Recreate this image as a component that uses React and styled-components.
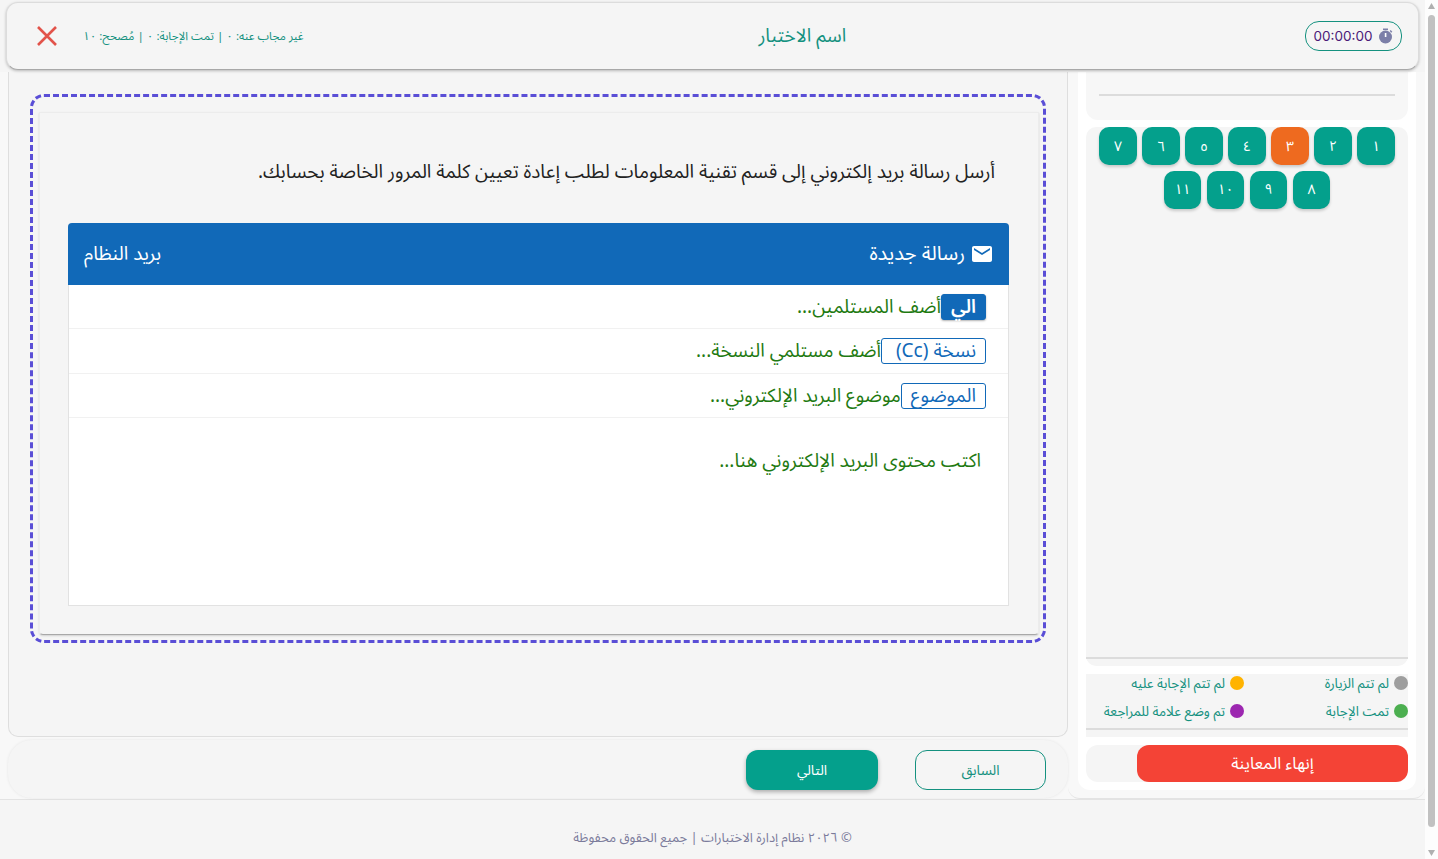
import React from "react";
import styled, { createGlobalStyle } from "styled-components";

const Global = createGlobalStyle`
  html, body { margin: 0; padding: 0; height: 100%; overflow: hidden; background: #f5f5f5; }
  body { font-family: "Noto Sans Arabic", "DejaVu Sans", sans-serif; }
  * { box-sizing: border-box; }
`;

const Frame = styled.div`
  display: flex;
  height: 100vh;
  overflow: hidden;
`;
const ScrollRail = styled.div`
  width: 13px;
  flex: none;
  padding: 3px 3px;
  display: flex;
  flex-direction: column;
  align-items: center;
  background: #fdfdfd;
`;
const ScrollThumb = styled.div`
  width: 7px;
  height: 812px;
  margin: 6px 0 23px;
  flex: none;
  border-radius: 4px;
  background: #c1c1c1;
`;
const Page = styled.div`
  direction: rtl;
  flex: 1;
  min-width: 0;
  padding-top: 2px;
  background: #f5f5f5;
`;
const Header = styled.header`
  height: 68px;
  margin: 0 6px;
  padding: 0 16px 0 30px;
  display: flex;
  align-items: center;
  justify-content: space-between;
  background: #f5f5f5;
  border: 1px solid #dcdcdc;
  border-bottom-color: #a8a8a8;
  border-radius: 12px;
  box-shadow: 0 1px 3px rgba(0,0,0,.25);
  position: relative;
  z-index: 2;
`;
const Timer = styled.div`
  width: 97px;
  height: 30px;
  border: 1px solid #14917f;
  border-radius: 14px;
  display: flex;
  align-items: center;
  justify-content: center;
  gap: 6px;
  font: 13.5px Inter, "Liberation Sans", sans-serif;
  color: #4a1a78;
`;
const Title = styled.h1`
  margin: 0 4px 0 0;
  font-size: 19px;
  font-weight: 400;
  color: #14917f;
`;
const HeaderEnd = styled.div`
  display: flex;
  align-items: center;
  gap: 26px;
`;
const Stats = styled.span`
  font-size: 11.6px;
  color: #14917f;
`;
const Body = styled.div`
  display: flex;
  height: 727px;
  margin-top: 2px;
  background: #f8f8f8;
`;
const Side = styled.aside`
  width: 357px;
  flex: none;
  padding: 0 9px 8px 10px;
  border-radius: 0 0 12px 12px;
  border-bottom: 1px solid #e3e3e3;
`;
const SideCard = styled.div`
  height: 100%;
  padding: 0 8px 8px;
  background: #fff;
  border-radius: 0 0 12px 12px;
  display: flex;
  flex-direction: column;
`;
const TopPanel = styled.div`
  height: 48px;
  padding: 22px 13px 0;
  background: #f7f7f7;
  border-radius: 0 0 12px 12px;
`;
const Rule = styled.div`
  height: 2px;
  flex: none;
  background: #dcdcdc;
`;
const NumPanel = styled.div`
  flex: 1;
  margin-top: 7px;
  padding-bottom: 7px;
  background: #f5f5f5;
  border-radius: 10px;
  display: flex;
  flex-direction: column;
`;
const NumGrid = styled.div`
  flex: 1;
  padding: 0 13px;
  display: flex;
  flex-wrap: wrap;
  justify-content: center;
  align-content: flex-start;
  gap: 5.5px 5.5px;
`;
const Num = styled.button`
  width: 37.5px;
  height: 38px;
  padding: 0;
  border: 0;
  border-radius: 10px;
  background: ${p => (p.$current ? "#ee6a1f" : "#04a08c")};
  box-shadow: 0 2px 3px rgba(0,0,0,.18);
  color: #fff;
  font: inherit;
  font-size: 14px;
`;
const Legend = styled.div`
  margin-top: 8px;
  height: 63px;
  background: #f5f5f5;
  display: flex;
  flex-direction: column;
`;
const LegendGrid = styled.div`
  height: 46px;
  margin-bottom: 8px;
  display: grid;
  grid-template-columns: 164px 1fr;
  grid-auto-rows: 18px;
  row-gap: 10px;
`;
const LegendItem = styled.div`
  display: flex;
  align-items: center;
  gap: 5px;
  font-size: 13.5px;
  color: #14917f;
  white-space: nowrap;
`;
const Dot = styled.span`
  width: 14px;
  height: 14px;
  flex: none;
  border-radius: 50%;
  background: ${p => p.$c};
`;
const FinishPanel = styled.div`
  margin-top: 8px;
  height: 37px;
  background: #f5f5f5;
  border-radius: 12px;
`;
const Finish = styled.button`
  width: 271px;
  height: 37px;
  display: block;
  border: 0;
  border-radius: 12px;
  background: #f44336;
  color: #fff;
  font: inherit;
  font-size: 16.5px;
`;
const MainCol = styled.div`
  flex: 1;
  min-width: 0;
  padding: 0 0 0 8px;
  display: flex;
  flex-direction: column;
`;
const MainPanel = styled.main`
  height: 665px;
  padding: 22px 21px 0;
  border: 1px solid #dedede;
  border-top: 0;
  border-radius: 0 0 10px 10px;
  background: #f5f5f5;
`;
const Dashed = styled.section`
  height: 549px;
  padding: 15px 4px 5px 6px;
  border: 3px dashed #5a4ed6;
  border-radius: 14px;
`;
const QCard = styled.div`
  height: 100%;
  padding: 45px 29px 0 28px;
  border: 1px solid #ececec;
  border-bottom-color: #a8a8a8;
  border-radius: 0 0 4px 4px;
  box-shadow: 0 1px 2px rgba(0,0,0,.15);
`;
const Question = styled.p`
  margin: 0 0 37px;
  padding-right: 14px;
  height: 28px;
  line-height: 28px;
  font-size: 19px;
  color: #222;
  white-space: nowrap;
`;
const Mailbox = styled.div`
  height: 383px;
  background: #fff;
  border: 1px solid #e2e2e2;
  border-top: 0;
  border-radius: 4px 4px 0 0;
`;
const MailHead = styled.div`
  height: 62px;
  margin: 0 -1px;
  padding: 0 15px 0 16px;
  display: flex;
  align-items: center;
  justify-content: space-between;
  background: #1169b8;
  border-radius: 4px 4px 0 0;
  color: #fff;
  font-size: 19px;
`;
const MailTitle = styled.div`
  display: flex;
  align-items: center;
  gap: 5px;
  font-size: 20px;
`;
const Row = styled.div`
  height: ${p => p.$h || 44}px;
  padding: 0 22px;
  display: flex;
  align-items: center;
  border-bottom: 1px solid #f1f1f1;
  font-size: 19px;
  color: #1f7a12;
`;
const Tag = styled.span`
  height: 26px;
  min-width: ${p => p.$w || 0}px;
  padding: 0 9px;
  border: 1px solid #1169b8;
  border-radius: 3px;
  display: flex;
  align-items: center;
  font-size: 19px;
  font-weight: ${p => (p.$solid ? 600 : 400)};
  color: ${p => (p.$solid ? "#fff" : "#1169b8")};
  background: ${p => (p.$solid ? "#1169b8" : "transparent")};
  box-shadow: ${p => (p.$solid ? "0 1px 2px rgba(0,0,0,.3)" : "none")};
`;
const BodyText = styled.div`
  padding: 23px 27px 0 0;
  font-size: 19px;
  color: #1f7a12;
`;
const NavBar = styled.div`
  height: 58px;
  margin-top: 3px;
  padding: 10px 22px 0 0;
  display: flex;
  gap: 37px;
  background: #f5f5f5;
  border-radius: 24px;
  box-shadow: 0 0 3px rgba(0,0,0,.08);
`;
const NavBtn = styled.button`
  width: ${p => (p.$primary ? 132 : 131)}px;
  height: 40px;
  border-radius: 12px;
  border: ${p => (p.$primary ? "0" : "1px solid #14917f")};
  background: ${p => (p.$primary ? "#04a08c" : "transparent")};
  color: ${p => (p.$primary ? "#fff" : "#14917f")};
  box-shadow: ${p => (p.$primary ? "0 2px 4px rgba(0,0,0,.3)" : "none")};
  font: inherit;
  font-size: 14px;
`;
const Footer = styled.footer`
  height: 82px;
  padding-top: 24px;
  border-top: 1px solid #e3e3e3;
  text-align: center;
  font-size: 13px;
  color: #7b7b9b;
`;

const Stopwatch = () => (
  <svg width="15" height="16" viewBox="0 0 15 16" aria-hidden="true">
    <rect x="5" y="0.5" width="5" height="1.6" fill="#7c7fa8" />
    <circle cx="7.5" cy="9" r="6.5" fill="#7c7fa8" />
    <rect x="6.8" y="5" width="1.6" height="4" fill="#fff" />
    <path d="M12.2 2.6l1.6 1.6" stroke="#7c7fa8" strokeWidth="1.4" />
  </svg>
);
const Close = () => (
  <svg width="20" height="20" viewBox="0 0 20 20" aria-hidden="true">
    <path d="M1 1l18 18M19 1L1 19" stroke="#e2534a" strokeWidth="2.6" />
  </svg>
);
const Envelope = () => (
  <svg width="24" height="24" viewBox="0 0 24 24" fill="#fff" aria-hidden="true">
    <path d="M20 4H4c-1.1 0-2 .9-2 2v12c0 1.1.9 2 2 2h16c1.1 0 2-.9 2-2V6c0-1.1-.9-2-2-2zm0 4l-8 5-8-5V6l8 5 8-5v2z" />
  </svg>
);
const Arrow = ({ down }) => (
  <svg width="7" height="6" viewBox="0 0 7 6" aria-hidden="true">
    <path d={down ? "M0 0h7L3.5 6z" : "M3.5 0L7 6H0z"} fill="#b0b0b0" />
  </svg>
);

const nums = ["١", "٢", "٣", "٤", "٥", "٦", "٧", "٨", "٩", "١٠", "١١"];

export default function App() {
  return (
    <Frame>
      <Global />
      <Page>
        <Header>
          <Timer>
            <Stopwatch />
            <span>00:00:00</span>
          </Timer>
          <Title>اسم الاختبار</Title>
          <HeaderEnd>
            <Stats>غير مجاب عنه: ٠ | تمت الإجابة: ٠ | مُصحح: ١٠</Stats>
            <Close />
          </HeaderEnd>
        </Header>
        <Body>
          <Side>
            <SideCard>
              <TopPanel><Rule /></TopPanel>
              <NumPanel>
                <NumGrid>
                  {nums.map((n, i) => <Num key={n} $current={i === 2}>{n}</Num>)}
                </NumGrid>
                <Rule />
              </NumPanel>
              <Legend>
                <LegendGrid>
                  <LegendItem><Dot $c="#9e9e9e" />لم تتم الزيارة</LegendItem>
                  <LegendItem><Dot $c="#ffb300" />لم تتم الإجابة عليه</LegendItem>
                  <LegendItem><Dot $c="#4caf50" />تمت الإجابة</LegendItem>
                  <LegendItem><Dot $c="#9c27b0" />تم وضع علامة للمراجعة</LegendItem>
                </LegendGrid>
                <Rule />
              </Legend>
              <FinishPanel><Finish>إنهاء المعاينة</Finish></FinishPanel>
            </SideCard>
          </Side>
          <MainCol>
            <MainPanel>
              <Dashed>
                <QCard>
                  <Question>أرسل رسالة بريد إلكتروني إلى قسم تقنية المعلومات لطلب إعادة تعيين كلمة المرور الخاصة بحسابك.</Question>
                  <Mailbox>
                    <MailHead>
                      <MailTitle>
                        <Envelope />
                        <span>رسالة جديدة</span>
                      </MailTitle>
                      <span>بريد النظام</span>
                    </MailHead>
                    <Row><Tag $solid $w={45}>الي</Tag>أضف المستلمين...</Row>
                    <Row $h={45}><Tag $w={105}>نسخة (Cc)</Tag>أضف مستلمي النسخة...</Row>
                    <Row><Tag>الموضوع</Tag>موضوع البريد الإلكتروني...</Row>
                    <BodyText>اكتب محتوى البريد الإلكتروني هنا...</BodyText>
                  </Mailbox>
                </QCard>
              </Dashed>
            </MainPanel>
            <NavBar>
              <NavBtn>السابق</NavBtn>
              <NavBtn $primary>التالي</NavBtn>
            </NavBar>
          </MainCol>
        </Body>
        <Footer>© ٢٠٢٦ نظام إدارة الاختبارات | جميع الحقوق محفوظة</Footer>
      </Page>
      <ScrollRail>
        <Arrow />
        <ScrollThumb />
        <Arrow down />
      </ScrollRail>
    </Frame>
  );
}
